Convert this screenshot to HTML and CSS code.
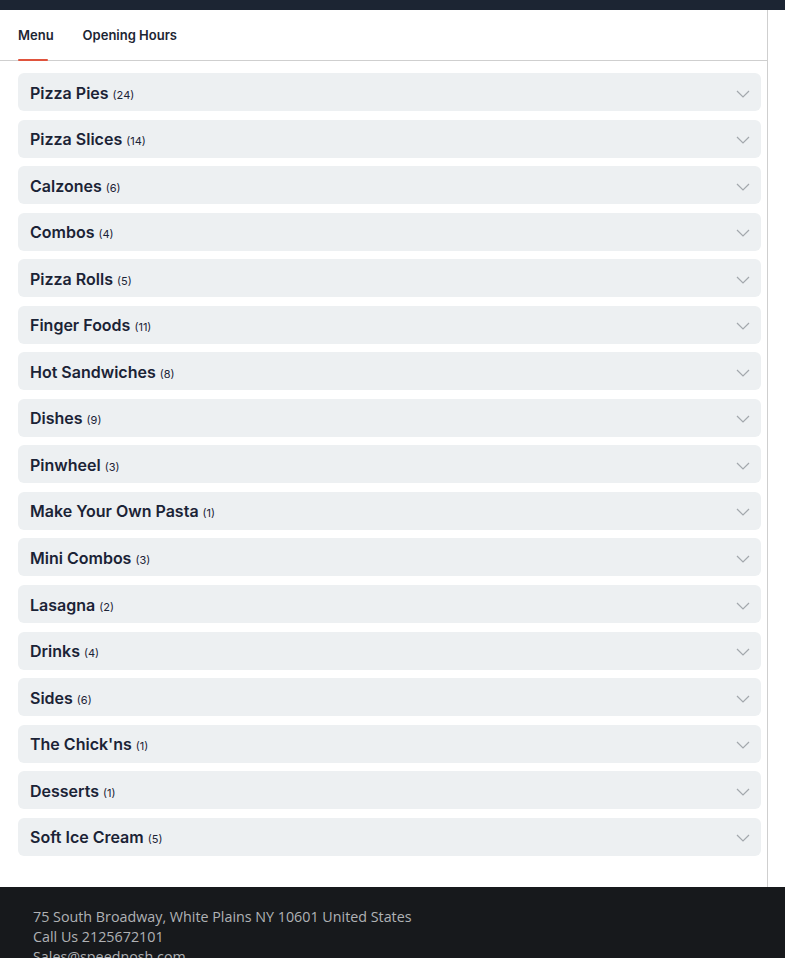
FILE: index.html
```html
<!DOCTYPE html>
<html>
<head>
<meta charset="utf-8">
<link rel="stylesheet" href="styles.css">
</head>
<body>
<div class="topbar"></div>
<div class="main">
  <nav class="tabs">
    <a class="tab active">Menu</a>
    <a class="tab">Opening Hours</a>
  </nav>
  <div class="list">
    <div class="cat"><span class="name">Pizza Pies</span><span class="count">(24)</span><svg class="chev" viewBox="0 0 14 8"><path d="M1 1l6 6 6-6"/></svg></div>
    <div class="cat"><span class="name">Pizza Slices</span><span class="count">(14)</span><svg class="chev" viewBox="0 0 14 8"><path d="M1 1l6 6 6-6"/></svg></div>
    <div class="cat"><span class="name">Calzones</span><span class="count">(6)</span><svg class="chev" viewBox="0 0 14 8"><path d="M1 1l6 6 6-6"/></svg></div>
    <div class="cat"><span class="name">Combos</span><span class="count">(4)</span><svg class="chev" viewBox="0 0 14 8"><path d="M1 1l6 6 6-6"/></svg></div>
    <div class="cat"><span class="name">Pizza Rolls</span><span class="count">(5)</span><svg class="chev" viewBox="0 0 14 8"><path d="M1 1l6 6 6-6"/></svg></div>
    <div class="cat"><span class="name">Finger Foods</span><span class="count">(11)</span><svg class="chev" viewBox="0 0 14 8"><path d="M1 1l6 6 6-6"/></svg></div>
    <div class="cat"><span class="name">Hot Sandwiches</span><span class="count">(8)</span><svg class="chev" viewBox="0 0 14 8"><path d="M1 1l6 6 6-6"/></svg></div>
    <div class="cat"><span class="name">Dishes</span><span class="count">(9)</span><svg class="chev" viewBox="0 0 14 8"><path d="M1 1l6 6 6-6"/></svg></div>
    <div class="cat"><span class="name">Pinwheel</span><span class="count">(3)</span><svg class="chev" viewBox="0 0 14 8"><path d="M1 1l6 6 6-6"/></svg></div>
    <div class="cat"><span class="name">Make Your Own Pasta</span><span class="count">(1)</span><svg class="chev" viewBox="0 0 14 8"><path d="M1 1l6 6 6-6"/></svg></div>
    <div class="cat"><span class="name">Mini Combos</span><span class="count">(3)</span><svg class="chev" viewBox="0 0 14 8"><path d="M1 1l6 6 6-6"/></svg></div>
    <div class="cat"><span class="name">Lasagna</span><span class="count">(2)</span><svg class="chev" viewBox="0 0 14 8"><path d="M1 1l6 6 6-6"/></svg></div>
    <div class="cat"><span class="name">Drinks</span><span class="count">(4)</span><svg class="chev" viewBox="0 0 14 8"><path d="M1 1l6 6 6-6"/></svg></div>
    <div class="cat"><span class="name">Sides</span><span class="count">(6)</span><svg class="chev" viewBox="0 0 14 8"><path d="M1 1l6 6 6-6"/></svg></div>
    <div class="cat"><span class="name">The Chick'ns</span><span class="count">(1)</span><svg class="chev" viewBox="0 0 14 8"><path d="M1 1l6 6 6-6"/></svg></div>
    <div class="cat"><span class="name">Desserts</span><span class="count">(1)</span><svg class="chev" viewBox="0 0 14 8"><path d="M1 1l6 6 6-6"/></svg></div>
    <div class="cat"><span class="name">Soft Ice Cream</span><span class="count">(5)</span><svg class="chev" viewBox="0 0 14 8"><path d="M1 1l6 6 6-6"/></svg></div>
  </div>
</div>
<footer class="footer">
  <p>75 South Broadway, White Plains NY 10601 United States</p>
  <p>Call Us 2125672101</p>
  <p>Sales@speednosh.com</p>
</footer>
</body>
</html>
```
FILE: styles.css
```css
* { box-sizing: border-box; }
html, body { margin: 0; padding: 0; background: #fff; }
body { font-family: Inter, "Liberation Sans", sans-serif; color: #1b2336; overflow: hidden; }
.topbar { height: 10px; background: #1c2533; }
.main { width: 768px; border-right: 1px solid #cfcfcf; padding-bottom: 31px; }
.tabs { display: flex; height: 51px; border-bottom: 1px solid #cfcfcf; padding-left: 18px; gap: 29px; }
.tab { display: flex; align-items: center; font-size: 13px; font-weight: 600; color: #1c2533; position: relative; }
.tab.active::after { content: ""; position: absolute; left: 0; right: 6px; bottom: -1px; height: 2px; background: #e0533d; border-radius: 1px; }
.list { padding: 12px 6px 0 18px; display: flex; flex-direction: column; gap: 8.56px; }
.cat { height: 38px; background: #edf0f2; border-radius: 6px; display: flex; align-items: center; padding: 1px 11px 0 12px; }
.name { font-size: 16px; font-weight: 600; color: #1b2336; }
.count { font-size: 11px; margin-left: 4px; margin-top: 4px; color: #1b2336; }
.chev { width: 14px; height: 8px; margin-left: auto; margin-top: 2px; fill: none; stroke: #a3a8ad; stroke-width: 1.2; }
.footer { background: #17191c; padding: 20px 33px 10px; height: 100px; }
.footer p { margin: 0; font-family: "Open Sans", sans-serif; font-size: 14.3px; line-height: 20px; color: #b0b2b5; }
```
